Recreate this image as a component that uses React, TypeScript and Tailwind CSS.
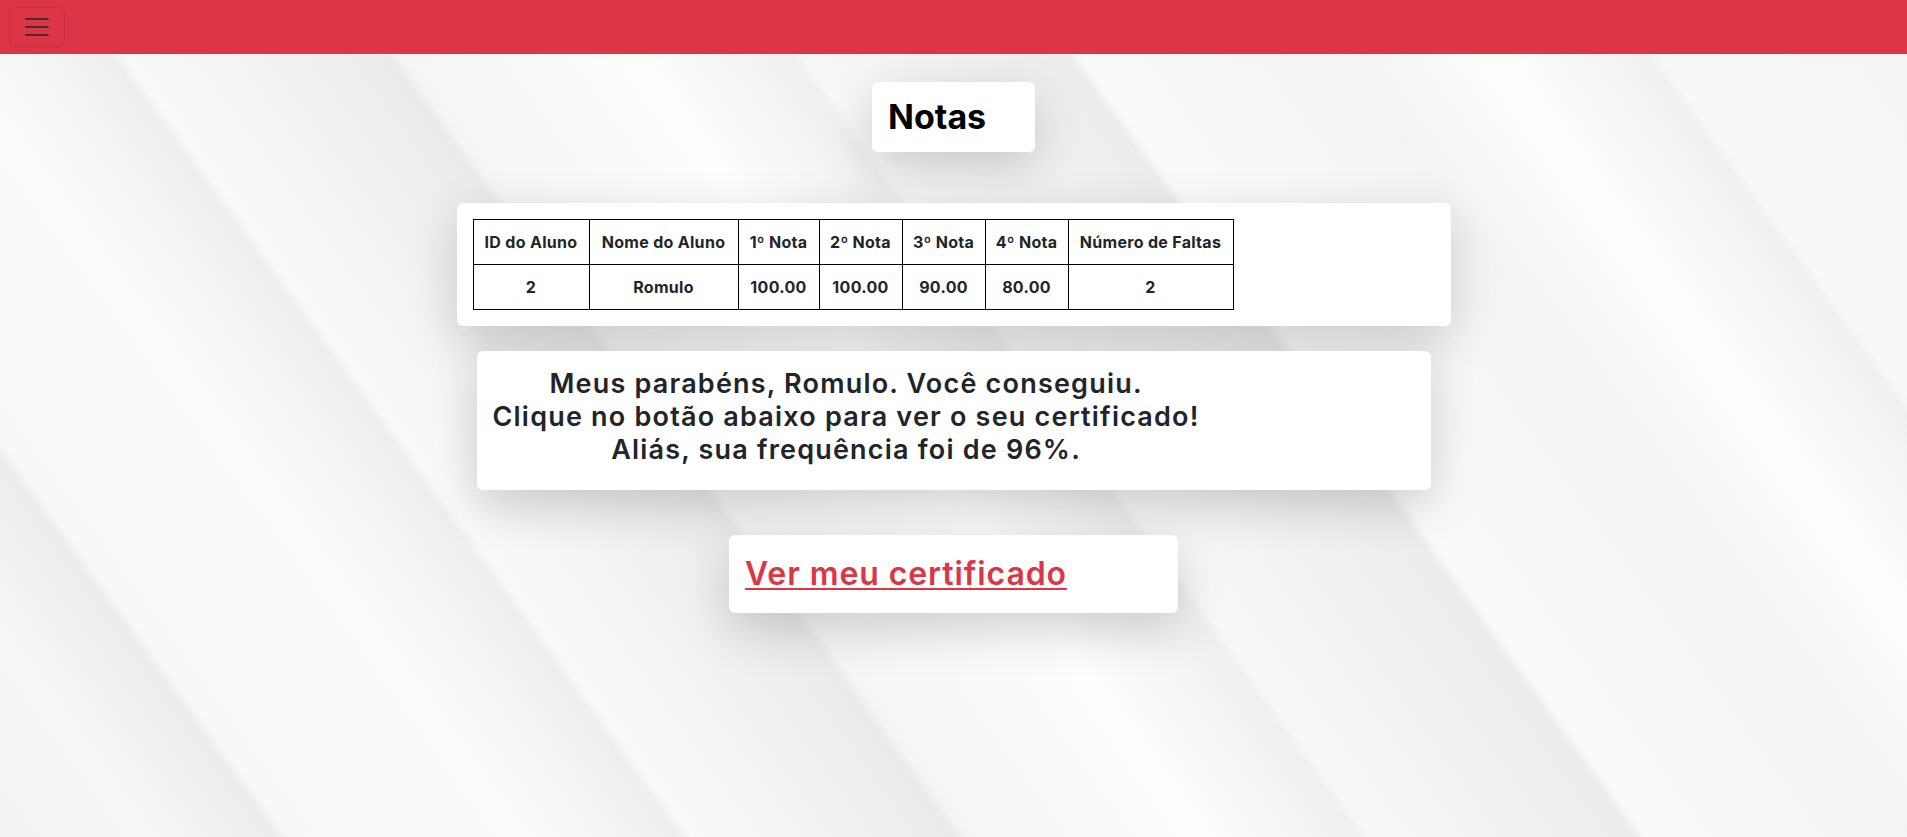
export default function App() {
  const headers = ["ID do Aluno", "Nome do Aluno", "1º Nota", "2º Nota", "3º Nota", "4º Nota", "Número de Faltas"];
  const widths = ["w-[116px]", "w-[149px]", "w-[81px]", "w-[83px]", "w-[83px]", "w-[83px]", "w-[165px]"];
  const row = ["2", "Romulo", "100.00", "100.00", "90.00", "80.00", "2"];

  return (
    <div className="min-h-screen font-['Inter',sans-serif] text-[#212529] bg-[#f3f3f3] bg-[linear-gradient(54deg,#f2f2f2_0%,#f6f6f6_6%,#ececec_11%,#f8f8f8_11.5%,#fbfbfb_21%,#eeeeee_27%,#f9f9f9_27.5%,#ebebeb_38%,#f5f5f5_38.5%,#fdfdfd_48%,#efefef_54%,#f7f7f7_54.5%,#ececec_65%,#fafafa_65.5%,#f3f3f3_76%,#fefefe_82%,#f0f0f0_88%,#f8f8f8_88.5%,#f4f4f4_100%)]">
      <nav className="h-[54px] bg-[#dc3545] flex items-center px-[9px]">
        <button className="w-[56px] h-[40px] rounded-md border border-black/10 flex items-center justify-center">
          <svg width="30" height="30" viewBox="0 0 30 30">
            <path d="M4 7h22M4 15h22M4 23h22" stroke="rgba(33,37,41,0.75)" strokeWidth="2" strokeLinecap="round" strokeMiterlimit="10" />
          </svg>
        </button>
      </nav>

      <main className="flex flex-col items-center pt-[28px] pb-10">
        <div className="w-[163px] bg-white rounded-md shadow-[0_1rem_3rem_rgba(0,0,0,0.175)] px-4 py-4">
          <h2 className="text-[34px] leading-[38px] font-bold text-black">Notas</h2>
        </div>

        <div className="mt-[51px] w-[994px] bg-white rounded-md shadow-[0_1rem_3rem_rgba(0,0,0,0.175)] p-4">
          <table className="border-collapse text-[16px] font-bold tracking-[0.3px] text-center">
            <thead>
              <tr>
                {headers.map((h, i) => (
                  <th key={h} className={`${widths[i]} h-[45px] border border-black px-2 font-bold`}>{h}</th>
                ))}
              </tr>
            </thead>
            <tbody>
              <tr>
                {row.map((c, i) => (
                  <td key={i} className="h-[45px] border border-black px-2">{c}</td>
                ))}
              </tr>
            </tbody>
          </table>
        </div>

        <div className="mt-[25px] w-[954px] bg-white rounded-md shadow-[0_1rem_3rem_rgba(0,0,0,0.175)] px-4 pt-4 pb-6">
          <h3 className="w-fit text-center text-[27px] leading-[33px] font-semibold tracking-[1.2px]">
            Meus parabéns, Romulo. Você conseguiu.
            <br />
            Clique no botão abaixo para ver o seu certificado!
            <br />
            Aliás, sua frequência foi de 96%.
          </h3>
        </div>

        <div className="mt-[45px] w-[449px] bg-white rounded-md shadow-[0_1rem_3rem_rgba(0,0,0,0.175)] px-4 py-5">
          <h2 className="text-[32px] leading-[38px] font-semibold tracking-[0.9px]">
            <a href="#" className="text-[#dc3545] underline underline-offset-[3px] decoration-2">Ver meu certificado</a>
          </h2>
        </div>
      </main>
    </div>
  );
}
